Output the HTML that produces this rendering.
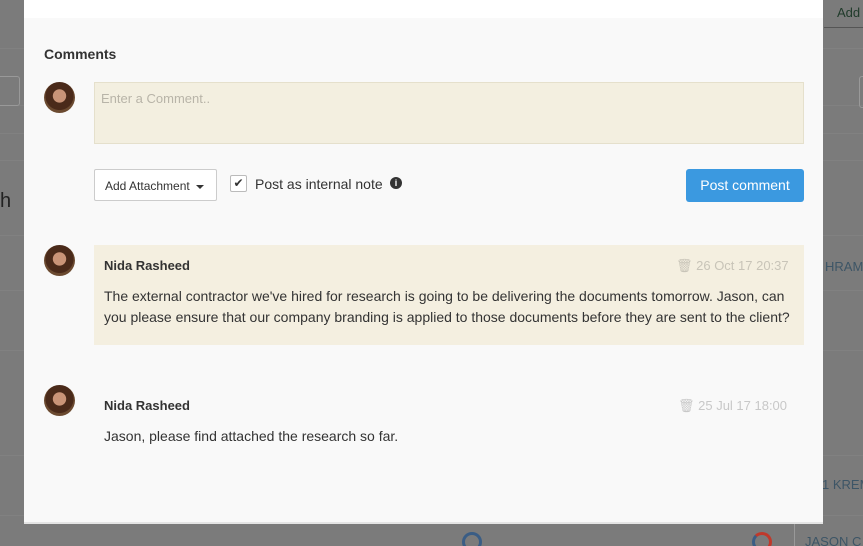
<!DOCTYPE html>
<html><head><meta charset="utf-8"><style>
*{box-sizing:border-box;margin:0;padding:0}
html,body{width:863px;height:546px;overflow:hidden}
body{background:#7b7b7b;font-family:"Liberation Sans",sans-serif;position:relative}
.bg{position:absolute;color:#3d5566;font-size:13px;white-space:nowrap}
.line{position:absolute;left:0;right:0;height:1px;background:#818181}
.modal{position:absolute;left:24px;top:0;width:799px;height:524px;background:#f9f9f9;border-bottom:2px solid #e4e4e4}
.top{height:18px;background:#fff}
.av{position:absolute;width:31px;height:31px;border-radius:50%;background:radial-gradient(circle at 50% 45%,#c99478 0 28%,#4a2a1a 30% 60%,#6b4a30 62%)}
.t{position:absolute;font-size:14px;color:#333;white-space:nowrap}
</style></head><body>
<div class="line" style="top:48px"></div>
<div class="line" style="top:105px"></div>
<div class="line" style="top:133px"></div>
<div class="line" style="top:160px"></div>
<div class="line" style="top:235px"></div>
<div class="line" style="top:290px"></div>
<div class="line" style="top:350px"></div>
<div class="line" style="top:455px"></div>
<div class="line" style="top:515px"></div>
<div style="position:absolute;left:-10px;top:76px;width:30px;height:30px;border:1px solid #999;border-radius:3px"></div>
<div class="bg" style="left:0;top:190px;font-size:20px;color:#222">h</div>
<div style="position:absolute;left:824px;top:0;width:39px;height:28px;border-bottom:1px solid #555"></div>
<div class="bg" style="left:837px;top:5px;color:#1f3a2a">Add</div>
<div style="position:absolute;left:859px;top:76px;width:10px;height:32px;border:1px solid #999;border-radius:3px"></div>
<div class="bg" style="left:825px;top:259px">HRAM</div>
<div class="bg" style="left:822px;top:477px">1 KREM</div>
<div class="bg" style="left:805px;top:534px">JASON C</div>
<div style="position:absolute;left:794px;top:524px;width:1px;height:22px;background:#999"></div>
<div style="position:absolute;left:462px;top:532px;width:20px;height:20px;border:3px solid #3a5d85;border-radius:50%"></div>
<div style="position:absolute;left:752px;top:532px;width:20px;height:20px;border:3px solid #3a5d85;border-top-color:#c0392b;border-right-color:#c0392b;border-radius:50%"></div>

<div class="modal">
<div class="top"></div>
<div class="t" style="left:20px;top:46px;font-weight:bold;font-size:14px">Comments</div>
<div class="av" style="left:20px;top:82px"></div>
<div style="position:absolute;left:70px;top:82px;width:710px;height:62px;background:#f3efe0;border:1px solid #e5e0cc;padding:8px 6px;font-size:13px;color:#b8b4a8">Enter a Comment..</div>
<div style="position:absolute;left:70px;top:169px;width:123px;height:32px;background:#fff;border:1px solid #ccc;border-radius:2px;font-size:12px;color:#333;padding:9px 10px;white-space:nowrap">Add Attachment <span style="display:inline-block;border:4px solid transparent;border-top:4px solid #333;vertical-align:middle;margin-left:3px;margin-top:4px"></span></div>
<div style="position:absolute;left:206px;top:175px;width:17px;height:17px;border:1px solid #bbb;border-radius:2px;background:#fff;font-size:12px;line-height:15px;text-align:center;color:#333">✔</div>
<div class="t" style="left:231px;top:176px">Post as internal note</div>
<div style="position:absolute;left:366px;top:177px;width:12px;height:12px;border-radius:50%;background:#333;color:#fff;font-size:9px;font-weight:bold;text-align:center;line-height:12px">i</div>
<div style="position:absolute;left:662px;top:169px;width:118px;height:33px;background:#3b99e0;border-radius:3px;color:#fff;font-size:14px;text-align:center;line-height:33px">Post comment</div>

<div class="av" style="left:20px;top:245px"></div>
<div style="position:absolute;left:70px;top:245px;width:710px;height:100px;background:#f4efe0"></div>
<div class="t" style="left:80px;top:258px;font-weight:bold;font-size:13px">Nida Rasheed</div>
<div class="t" style="left:652px;top:258px;color:#c8c4b8;font-size:13px">🗑︎ 26 Oct 17 20:37</div>
<div class="t" style="left:80px;top:286px;line-height:21px;width:700px;white-space:normal">The external contractor we've hired for research is going to be delivering the documents tomorrow. Jason, can you please ensure that our company branding is applied to those documents before they are sent to the client?</div>

<div class="av" style="left:20px;top:385px"></div>
<div class="t" style="left:80px;top:398px;font-weight:bold;font-size:13px">Nida Rasheed</div>
<div class="t" style="left:654px;top:398px;color:#c8c8c8;font-size:13px">🗑︎ 25 Jul 17 18:00</div>
<div class="t" style="left:80px;top:428px">Jason, please find attached the research so far.</div>
</div>
</body></html>
